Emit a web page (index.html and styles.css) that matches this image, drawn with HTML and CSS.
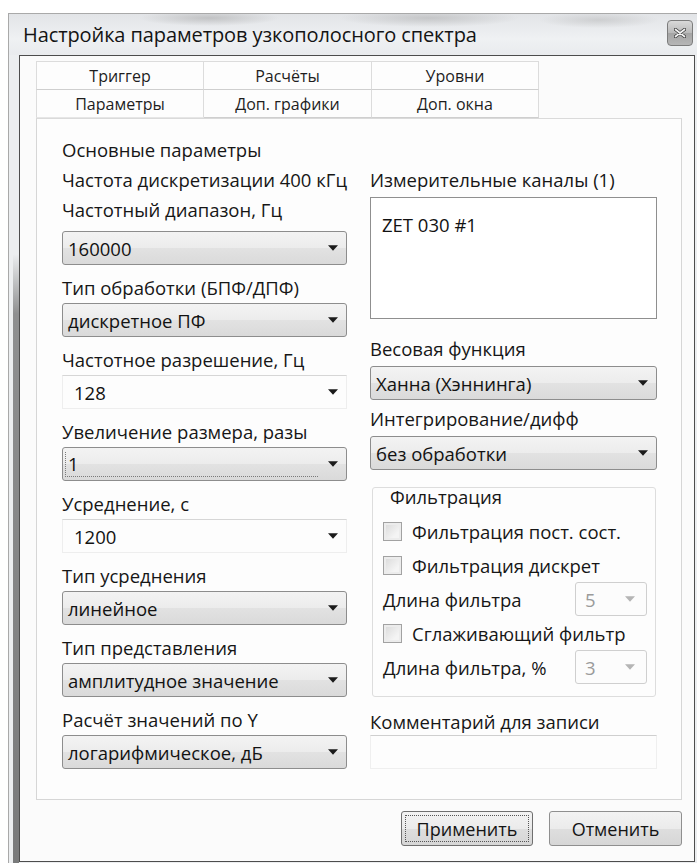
FILE: index.html
```html
<!DOCTYPE html>
<html lang="ru">
<head>
<meta charset="utf-8">
<title>Настройка параметров узкополосного спектра</title>
<link rel="stylesheet" href="styles.css">
</head>
<body>
<div class="window">
  <div class="titlebar">
    <span class="title">Настройка параметров узкополосного спектра</span>
    <span class="close" aria-label="Закрыть">
      <svg viewBox="0 0 12 10" width="12" height="10"><path d="M1.5 1.5 L10.5 8.5 M10.5 1.5 L1.5 8.5" stroke="#3c3c3c" stroke-width="3.4" stroke-linecap="round"/><path d="M1.5 1.5 L10.5 8.5 M10.5 1.5 L1.5 8.5" stroke="#f4f4f4" stroke-width="1.7" stroke-linecap="round"/></svg>
    </span>
  </div>

  <div class="client">
    <div class="tabs">
      <div class="tab">Триггер</div>
      <div class="tab">Расчёты</div>
      <div class="tab">Уровни</div>
      <div class="tab active">Параметры</div>
      <div class="tab">Доп. графики</div>
      <div class="tab">Доп. окна</div>
    </div>

    <div class="panel">
      <div class="col col-left">
        <div class="caption">Основные параметры</div>
        <div class="caption">Частота дискретизации 400 кГц</div>

        <div class="field">
          <div class="label first">Частотный диапазон, Гц</div>
          <div class="combo"><span class="value">160000</span><svg class="arrow" viewBox="0 0 9 5"><path d="M0 0H9L4.5 5Z"/></svg></div>
        </div>
        <div class="field">
          <div class="label">Тип обработки (БПФ/ДПФ)</div>
          <div class="combo"><span class="value">дискретное ПФ</span><svg class="arrow" viewBox="0 0 9 5"><path d="M0 0H9L4.5 5Z"/></svg></div>
        </div>
        <div class="field">
          <div class="label">Частотное разрешение, Гц</div>
          <div class="combo flat"><span class="value">128</span><svg class="arrow" viewBox="0 0 9 5"><path d="M0 0H9L4.5 5Z"/></svg></div>
        </div>
        <div class="field">
          <div class="label">Увеличение размера, разы</div>
          <div class="combo focus"><span class="value">1</span><svg class="arrow" viewBox="0 0 9 5"><path d="M0 0H9L4.5 5Z"/></svg></div>
        </div>
        <div class="field">
          <div class="label">Усреднение, с</div>
          <div class="combo flat"><span class="value">1200</span><svg class="arrow" viewBox="0 0 9 5"><path d="M0 0H9L4.5 5Z"/></svg></div>
        </div>
        <div class="field">
          <div class="label">Тип усреднения</div>
          <div class="combo"><span class="value">линейное</span><svg class="arrow" viewBox="0 0 9 5"><path d="M0 0H9L4.5 5Z"/></svg></div>
        </div>
        <div class="field">
          <div class="label">Тип представления</div>
          <div class="combo"><span class="value">амплитудное значение</span><svg class="arrow" viewBox="0 0 9 5"><path d="M0 0H9L4.5 5Z"/></svg></div>
        </div>
        <div class="field">
          <div class="label">Расчёт значений по Y</div>
          <div class="combo"><span class="value">логарифмическое, дБ</span><svg class="arrow" viewBox="0 0 9 5"><path d="M0 0H9L4.5 5Z"/></svg></div>
        </div>
      </div>

      <div class="col col-right">
        <div class="label">Измерительные каналы (1)</div>
        <div class="listbox"><div class="list-item">ZET 030 #1</div></div>

        <div class="label weight">Весовая функция</div>
        <div class="combo tight"><span class="value">Ханна (Хэннинга)</span><svg class="arrow" viewBox="0 0 9 5"><path d="M0 0H9L4.5 5Z"/></svg></div>

        <div class="label integ">Интегрирование/дифф</div>
        <div class="combo tight"><span class="value">без обработки</span><svg class="arrow" viewBox="0 0 9 5"><path d="M0 0H9L4.5 5Z"/></svg></div>

        <div class="group">
          <div class="group-title">Фильтрация</div>
          <div class="grow"><span class="check"></span><span>Фильтрация пост. сост.</span></div>
          <div class="grow"><span class="check"></span><span>Фильтрация дискрет</span></div>
          <div class="grow split"><span>Длина фильтра</span><span class="mini"><span>5</span><svg class="arrow" viewBox="0 0 9 5"><path d="M0 0H9L4.5 5Z"/></svg></span></div>
          <div class="grow"><span class="check"></span><span>Сглаживающий фильтр</span></div>
          <div class="grow split"><span>Длина фильтра, %</span><span class="mini"><span>3</span><svg class="arrow" viewBox="0 0 9 5"><path d="M0 0H9L4.5 5Z"/></svg></span></div>
        </div>

        <div class="label comment-label">Комментарий для записи</div>
        <div class="edit"></div>
      </div>
    </div>

    <div class="buttons">
      <div class="btn default"><span>Применить</span></div>
      <div class="btn">Отменить</div>
    </div>
  </div>
</div>
</body>
</html>
```

FILE: styles.css
```css
html, body {
  margin: 0;
  padding: 0;
  background: #ffffff;
  overflow: hidden;
}

body {
  font-family: "Open Sans", "Noto Sans", "DejaVu Sans", sans-serif;
  font-size: 18.5px;
  color: #161616;
}

/* dialog frame */
.window {
  margin: 13px 0 0 8px;
  width: 695px;
  height: 850px;
  box-sizing: border-box;
  border-left: 1px solid #a9a9a9;
  border-top: 1px solid #a9a9a9;
  background:
    linear-gradient(to bottom, transparent 0, transparent 240px, rgba(80, 80, 80, 0.6) 300px, rgba(60, 60, 60, 0.65) 100%) 4px top / 6px 100% no-repeat,
    #eceef0;
  display: flex;
  flex-direction: column;
}

.titlebar {
  height: 41px;
  flex: none;
  display: flex;
  align-items: center;
  justify-content: space-between;
  padding: 0 10px 0 14px;
  background:
    radial-gradient(ellipse 70px 8px at 200px 4px, rgba(150, 150, 150, 0.45), transparent),
    radial-gradient(ellipse 90px 9px at 420px 4px, rgba(150, 150, 150, 0.4), transparent),
    radial-gradient(ellipse 60px 8px at 590px 6px, rgba(160, 160, 160, 0.35), transparent),
    linear-gradient(to bottom, #e2e4e7, #eff1f3 60%, #e9ebee);
}

.title {
  font-size: 20px;
  color: #141414;
  letter-spacing: -0.1px;
}

.close {
  align-self: flex-start;
  margin-top: 6px;
  width: 26px;
  height: 26px;
  box-sizing: border-box;
  border: 1px solid #7c7c7c;
  border-radius: 4px;
  background: linear-gradient(to bottom, #d9d9d9, #b9b9b9 50%, #a4a4a4 51%, #b6b6b6);
  display: flex;
  align-items: center;
  justify-content: center;
}

/* client area */
.client {
  margin-left: 10px;
  width: 676px;
  height: 807px;
  box-sizing: border-box;
  border: 1px solid #4d4d4d;
  background: #fbfbfb;
  padding: 5px 0 0 16px;
  display: flex;
  flex-direction: column;
}

/* two-row tab strip */
.tabs {
  display: grid;
  grid-template-columns: 168px 168px 167px;
  grid-template-rows: 29px 28px;
  width: 503px;
}

.tab {
  display: flex;
  align-items: center;
  justify-content: center;
  font-size: 16px;
  color: #1e1e1e;
  border-right: 1px solid #dcdcdc;
  border-bottom: 1px solid #cfcfcf;
  background: #fdfdfd;
}

.tab:nth-child(1),
.tab:nth-child(4) {
  border-left: 1px solid #dcdcdc;
}

.tab:nth-child(-n+3) {
  border-top: 1px solid #dcdcdc;
}

.tab.active {
  border-bottom-color: #e6e6e6;
}

/* tab page */
.panel {
  width: 646px;
  height: 682px;
  box-sizing: border-box;
  border: 1px solid #d6d6d6;
  border-top-color: #dadada;
  background: #fdfdfd;
  padding: 16px 24px 0 25px;
  display: flex;
  gap: 23px;
}

.col {
  display: flex;
  flex-direction: column;
}

.col-left {
  width: 285px;
}

.col-right {
  width: 287px;
  padding-top: 30px;
}

.caption,
.label {
  height: 30px;
  line-height: 30px;
  white-space: nowrap;
}

.label.first {
  margin-bottom: 6px;
}

.field + .field {
  margin-top: 8px;
}

/* drop-down lists */
.combo {
  height: 34px;
  box-sizing: border-box;
  border: 1px solid #8d8d8d;
  border-radius: 3px;
  background: linear-gradient(to bottom, #f3f3f3, #ececec 50%, #e2e2e2 51%, #dadada);
  display: flex;
  align-items: center;
  padding: 0 8px 0 5px;
  color: #121212;
}

.combo .value {
  flex: 1;
  white-space: nowrap;
}

.combo.flat {
  border-color: #eeeeee;
  border-top-color: #d6d6d6;
  border-radius: 0;
  background: #fdfdfd;
  padding-left: 11px;
}

.combo.focus .value {
  margin-right: 10px;
  line-height: 24px;
  border-bottom: 1px dotted #7a7a7a;
  border-left: 1px dotted #7a7a7a;
  padding-left: 2px;
  margin-left: -3px;
}

.arrow {
  width: 10px;
  height: 6px;
  fill: #1b1b1b;
  flex: none;
}

.listbox {
  margin-top: 2px;
  height: 122px;
  box-sizing: border-box;
  border: 1px solid #8f8f8f;
  background: #ffffff;
  padding: 15px 0 0 11px;
}

.list-item {
  line-height: 24px;
  color: #121212;
}

.label.weight {
  margin-top: 15px;
}

.combo.tight {
  margin-top: 2px;
}

.label.integ {
  margin-top: 4px;
}

/* "Фильтрация" group box */
.group {
  margin: 17px 1px 0 2px;
  height: 210px;
  box-sizing: border-box;
  border: 1px solid #dddddd;
  border-radius: 3px;
  padding: 0 8px 12px 10px;
  display: flex;
  flex-direction: column;
}

.group-title {
  height: 18px;
  line-height: 18px;
  margin-bottom: 8px;
  padding-left: 7px;
}

.grow {
  height: 34px;
  display: flex;
  align-items: center;
  gap: 10px;
  white-space: nowrap;
}

.grow.split {
  justify-content: space-between;
}

.check {
  width: 19px;
  height: 19px;
  box-sizing: border-box;
  border: 1px solid #a2a2a2;
  background: linear-gradient(135deg, #d8d8d8, #f4f4f4 70%);
  box-shadow: inset 0 0 0 2px #ececec;
  flex: none;
}

.mini {
  width: 72px;
  height: 34px;
  box-sizing: border-box;
  border: 1px solid #cfcfcf;
  border-radius: 3px;
  background: #fcfcfc;
  display: flex;
  align-items: center;
  justify-content: space-between;
  padding: 0 11px 0 9px;
  color: #9a9a9a;
}

.mini .arrow {
  fill: #b5b5b5;
}

.label.comment-label {
  margin-top: 10px;
  height: 28px;
}

.edit {
  height: 34px;
  box-sizing: border-box;
  border: 1px solid #efefef;
  border-top-color: #cfcfcf;
  background: #fdfdfd;
}

/* dialog buttons */
.buttons {
  width: 646px;
  margin-top: 11px;
  display: flex;
  justify-content: flex-end;
  gap: 16px;
}

.btn {
  width: 133px;
  height: 35px;
  box-sizing: border-box;
  border: 1px solid #8f8f8f;
  border-radius: 3px;
  background: linear-gradient(to bottom, #f3f3f3, #ebebeb 50%, #dedede 51%, #d6d6d6);
  display: flex;
  align-items: center;
  justify-content: center;
  font-size: 18px;
  color: #141414;
}

.btn.default {
  width: 132px;
  border-color: #6f6f6f;
  padding: 3px;
}

.btn.default span {
  flex: 1;
  align-self: stretch;
  display: flex;
  align-items: center;
  justify-content: center;
  border: 1px dotted #555555;
}
```
